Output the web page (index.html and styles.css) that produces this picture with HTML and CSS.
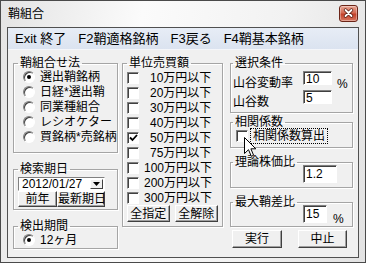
FILE: index.html
```html
<!DOCTYPE html>
<html lang="ja">
<head>
  <meta charset="UTF-8">
  <title>鞘組合</title>
  <link rel="stylesheet" href="styles.css">
</head>
<body>

<div class="window">
  <div class="titlebar">
    <span class="title">鞘組合</span>
    <span class="close">
      <svg width="17" height="15" viewBox="0 0 17 15">
        <path d="M5.5 4 L11.5 10 M11.5 4 L5.5 10" stroke="#5a1f14" stroke-width="3.4" stroke-linecap="round"/>
        <path d="M5.5 4 L11.5 10 M11.5 4 L5.5 10" stroke="#fff" stroke-width="1.8" stroke-linecap="round"/>
      </svg>
    </span>
  </div>

  <div class="frame">
    <div class="menubar">
      <span>Exit 終了</span>
      <span>F2鞘適格銘柄</span>
      <span>F3戻る</span>
      <span>F4鞘基本銘柄</span>
    </div>

    <div class="client">
      <div class="col col1">
        <fieldset class="g-method">
          <legend>鞘組合せ法</legend>
          <div class="opt"><span class="radio on"></span>選出鞘銘柄</div>
          <div class="opt"><span class="radio"></span>日経*選出鞘</div>
          <div class="opt"><span class="radio"></span>同業種組合</div>
          <div class="opt"><span class="radio"></span>レシオケター</div>
          <div class="opt"><span class="radio"></span>買銘柄*売銘柄</div>
        </fieldset>

        <fieldset class="g-date">
          <legend>検索期日</legend>
          <div class="combo">
            <span class="val">2012/01/27</span>
            <span class="drop"><svg width="7" height="4" viewBox="0 0 7 4"><path d="M0 0 H7 L3.5 4 Z" fill="#000"/></svg></span>
          </div>
          <div class="btnrow">
            <button class="btn b-prev">前年</button><button class="btn b-latest">最新期日</button>
          </div>
        </fieldset>

        <fieldset class="g-period">
          <legend>検出期間</legend>
          <div class="opt"><span class="radio on"></span>12ヶ月</div>
        </fieldset>
      </div>

      <div class="col col2">
        <fieldset class="g-amount">
          <legend>単位売買額</legend>
          <div class="chk"><span class="box"></span><span class="sp">10万円以下</span></div>
          <div class="chk"><span class="box"></span><span class="sp">20万円以下</span></div>
          <div class="chk"><span class="box"></span><span class="sp">30万円以下</span></div>
          <div class="chk"><span class="box"></span><span class="sp">40万円以下</span></div>
          <div class="chk"><span class="box on"><svg width="9" height="8" viewBox="0 0 9 8"><path d="M1 3.5 L3.5 6 L8 1" stroke="#000" stroke-width="1.8" fill="none"/></svg></span><span class="sp">50万円以下</span></div>
          <div class="chk"><span class="box"></span><span class="sp">75万円以下</span></div>
          <div class="chk"><span class="box"></span><span>100万円以下</span></div>
          <div class="chk"><span class="box"></span><span>200万円以下</span></div>
          <div class="chk"><span class="box"></span><span>300万円以下</span></div>
          <div class="btnrow">
            <button class="btn b-all">全指定</button><button class="btn b-none">全解除</button>
          </div>
        </fieldset>
      </div>

      <div class="col col3">
        <fieldset class="g-cond">
          <legend>選択条件</legend>
          <div class="field"><span class="lbl">山谷変動率</span><span class="txt w29">10</span><span class="unit">%</span></div>
          <div class="field"><span class="lbl">山谷数</span><span class="txt w29">5</span></div>
        </fieldset>

        <fieldset class="g-corr">
          <legend>相関係数</legend>
          <div class="chk"><span class="box"></span><span class="focus">相関係数算出</span></div>
        </fieldset>

        <fieldset class="g-ratio">
          <legend>理論株価比</legend>
          <div class="field"><span class="txt tall w34">1.2</span></div>
        </fieldset>

        <fieldset class="g-diff">
          <legend>最大鞘差比</legend>
          <div class="field"><span class="txt tall w24">15</span><span class="unit">%</span></div>
        </fieldset>

        <div class="actions">
          <button class="btn b-run">実行</button>
          <button class="btn b-stop">中止</button>
        </div>
      </div>
    </div>
  </div>

  <svg class="cursor" width="13" height="21" viewBox="0 0 13 21">
    <path d="M0.5 0.5 V16.5 L4.5 12.7 L7.3 19.3 L9.6 18.3 L6.9 11.8 H11.8 Z" fill="#fff" stroke="#000" stroke-width="1"/>
  </svg>
</div>

</body>
</html>
```

FILE: styles.css
```css
html, body { margin: 0; padding: 0; }
body { font-family: "Liberation Sans", "Noto Sans CJK JP", sans-serif; font-size: 12px; line-height: 12px; color: #000; white-space: nowrap; }

.window { position: relative; width: 366px; height: 263px; box-sizing: border-box; border: 1px solid #4a4a4a; padding: 0 6px 4px; background: linear-gradient(100deg, #e4e4e4, #fbfbfb 35%, #f2f2f2 70%, #e2e2e2); }
.titlebar { display: flex; justify-content: space-between; align-items: flex-start; height: 26px; margin: 0 -6px; padding: 0 7px; }
.title { margin-top: 7px; }
.close { display: flex; align-items: center; justify-content: center; width: 17px; height: 15px; margin-top: 4px; border: 1px solid #6b2417; border-radius: 3px; background: linear-gradient(#e9a897, #d46a53 45%, #c4412a 55%, #d7765f); box-shadow: inset 0 0 0 1px rgba(255,255,255,0.35); }

.frame { border: 1px solid #505050; background: #f0f0f0; }
.menubar { display: flex; height: 22px; align-items: center; padding-left: 1px; background: linear-gradient(#e7edf6, #dbe3f0); border-bottom: 1px solid #f4f6fa; box-sizing: border-box; font-size: 13px; }
.menubar span { padding: 0 6px; }

.client { display: flex; align-items: flex-start; height: 207px; box-sizing: border-box; padding: 7px 0 0 5px; }
.col1 { width: 105px; }
.col2 { width: 101px; margin-left: 4px; }
.col3 { width: 123px; margin-left: 7px; }

fieldset { margin: 0; padding: 0 4px; min-width: 0; border: 1px solid #a5a5a5; box-shadow: 1px 1px 0 #fff, inset 1px 1px 0 #fff; }
legend { padding: 0 2px; line-height: 12px; }

.opt { display: flex; align-items: center; height: 15px; padding-left: 5px; }
.radio { flex: none; width: 10px; height: 10px; margin-right: 5px; border-radius: 50%; border: 1px solid; border-color: #808080 #fff #fff #808080; background: #fff; box-shadow: inset 1px 1px 0 #404040; display: flex; align-items: center; justify-content: center; }
.radio.on::after { content: ""; width: 4px; height: 4px; border-radius: 50%; background: #000; }

.chk { display: flex; align-items: center; height: 15px; }
.box { flex: none; width: 10px; height: 10px; margin-right: 5px; border: 1px solid; border-color: #808080 #fff #fff #808080; background: #fff; box-shadow: inset 1px 1px 0 #404040; display: flex; align-items: center; justify-content: center; }
.sp { padding-left: 6px; }

.btn { font: inherit; line-height: 12px; white-space: nowrap; overflow: hidden; color: #000; margin: 0; padding: 0; background: #f0f0f0; border: 1px solid; border-color: #fff #404040 #404040 #fff; box-shadow: inset -1px -1px 0 #a0a0a0; }
.btnrow { display: flex; }

.g-method { padding-bottom: 8px; }
.g-date { margin-top: 10px; padding-bottom: 2px; }
.combo { display: flex; justify-content: space-between; align-items: center; width: 87px; height: 14px; margin-top: 2px; box-sizing: border-box; border: 1px solid; border-color: #808080 #fff #fff #808080; background: #fff; }
.combo .val { padding-left: 3px; }
.drop { display: flex; align-items: center; justify-content: center; width: 13px; height: 10px; margin-right: 1px; background: #f0f0f0; border: 1px solid; border-color: #fff #404040 #404040 #fff; box-sizing: border-box; }
.b-prev { width: 39px; height: 16px; }
.b-latest { width: 48px; height: 16px; }
.g-period { margin-top: 10px; padding-bottom: 1px; }

.g-amount { padding-top: 1px; padding-bottom: 4px; }
.b-all { width: 43px; height: 17px; }
.b-none { width: 44px; height: 17px; margin-left: 5px; }

.col3 fieldset { padding: 0 2px; }
.field { display: flex; align-items: flex-start; height: 19px; }
.lbl { width: 70px; padding-top: 6px; }
.txt { display: block; height: 14px; box-sizing: border-box; padding: 1px 0 0 2px; border: 1px solid; border-color: #808080 #fff #fff #808080; background: #fff; box-shadow: inset 1px 1px 0 #404040; }
.txt.tall { height: 18px; margin: -3px 0 0 70px; padding-top: 2px; }
.w29 { width: 29px; }
.w34 { width: 34px; }
.w24 { width: 24px; }
.unit { padding: 7px 0 0 5px; }

.g-cond { padding-top: 2px !important; padding-bottom: 3px !important; }
.g-corr { margin-top: 3px; padding-bottom: 4px !important; }
.g-corr .chk { padding-left: 3px; }
.g-corr .box { margin-right: 2px; }
.focus { border: 1px dotted #000; padding: 1px 2px; line-height: 12px; }
.g-ratio { margin-top: 8px; padding-bottom: 4px !important; }
.g-ratio .field, .g-diff .field { height: 15px; }
.g-diff { margin-top: 8px; padding-bottom: 3px !important; }
.g-diff .unit { padding: 5px 0 0 6px; }

.actions { display: flex; margin-top: 3px; }
.b-run { width: 50px; height: 18px; margin-left: 2px; }
.b-stop { width: 49px; height: 18px; margin-left: 16px; }

.cursor { position: absolute; left: 243px; top: 136px; }
```
